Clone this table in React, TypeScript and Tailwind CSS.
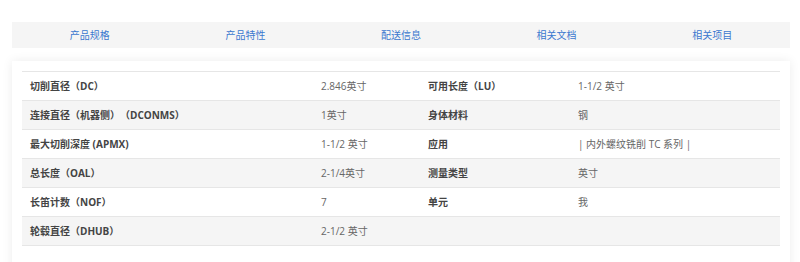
import React from "react";

const tabs = ["产品规格", "产品特性", "配送信息", "相关文档", "相关项目"];

const rows: [string, string, string, string][] = [
  ["切削直径（DC）", "2.846英寸", "可用长度（LU）", "1-1/2 英寸"],
  ["连接直径（机器侧）（DCONMS）", "1英寸", "身体材料", "钢"],
  ["最大切削深度 (APMX)", "1-1/2 英寸", "应用", "| 内外螺纹铣削 TC 系列 |"],
  ["总长度（OAL）", "2-1/4英寸", "测量类型", "英寸"],
  ["长笛计数（NOF）", "7", "单元", "我"],
  ["轮毂直径（DHUB）", "2-1/2 英寸", "", ""],
];

export default function App() {
  return (
    <div
      className="w-[800px] h-[262px] bg-white overflow-hidden pt-[22px] [text-spacing-trim:space-all]"
      style={{ fontFamily: '"Open Sans", "Noto Sans CJK SC", sans-serif' }}
    >
      <div className="ml-[12px] w-[778px] h-[26px] bg-[#f5f5f5] grid grid-cols-5 items-center">
        {tabs.map((t) => (
          <div key={t} className="text-center text-[10px] text-[#3b78cf] leading-none">
            {t}
          </div>
        ))}
      </div>
      <div className="ml-[12px] mt-[13px] w-[778px] h-[220px] bg-white shadow-[0_0_10px_rgba(0,0,0,0.08)] p-[10px]">
        <div className="border-b border-[#e6e6e6]">
          {rows.map((r, i) => (
            <div
              key={i}
              className={`grid grid-cols-[291px_107px_150px_1fr] h-[29px] items-center border-t border-[#e6e6e6] ${
                i % 2 === 1 ? "bg-[#f5f5f5]" : "bg-white"
              }`}
            >
              <div className="pl-[8px] text-[10px] font-bold text-[#444] whitespace-nowrap">{r[0]}</div>
              <div className="pl-[8px] text-[10px] text-[#666] whitespace-nowrap">{r[1]}</div>
              <div className="pl-[8px] text-[10px] font-bold text-[#444] whitespace-nowrap">{r[2]}</div>
              <div className="pl-[8px] text-[10px] text-[#666] whitespace-nowrap">{r[3]}</div>
            </div>
          ))}
        </div>
      </div>
    </div>
  );
}
